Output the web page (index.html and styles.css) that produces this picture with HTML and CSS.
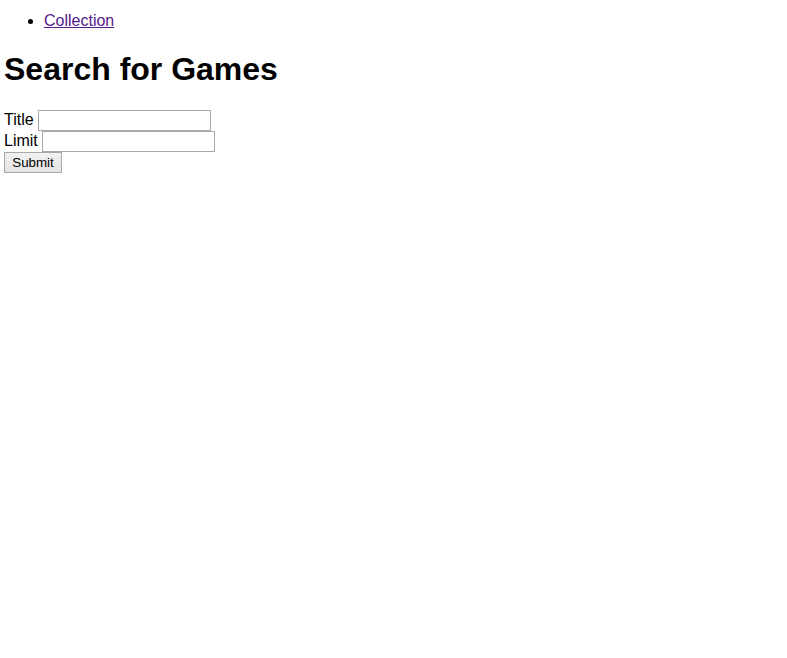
FILE: index.html
```html
<!DOCTYPE html>
<html>
<head>
<meta charset="utf-8">
<link rel="stylesheet" href="styles.css">
</head>
<body>
<ul class="nav">
  <li><a href="#" class="nav-link">Collection</a></li>
</ul>
<h1 class="title">Search for Games</h1>
<form class="search">
  <div class="row"><label class="lbl">Title</label><input class="field" type="text"></div>
  <div class="row"><label class="lbl">Limit</label><input class="field" type="text"></div>
  <div class="row"><button class="btn" type="button">Submit</button></div>
</form>
</body>
</html>
```
FILE: styles.css
```css
html, body {
  background: #fff;
}
body {
  margin: 4px;
  font-family: "Liberation Sans", Arial, sans-serif;
  font-size: 16px;
  color: #000;
}
.nav {
  margin: 8px 0 16px;
  padding-left: 40px;
}
.nav-link {
  color: #551a8b;
}
.title {
  font-size: 32px;
  font-weight: bold;
  margin: 21.44px 0;
}
.search {
  margin: 0;
}
.row {
  display: flex;
  align-items: flex-start;
  gap: 4px;
  height: 21px;
}
.lbl {
  line-height: 18px;
  padding-top: 1px;
}
.field {
  box-sizing: border-box;
  width: 173px;
  height: 21px;
  border: 1px solid #a9a9a9;
  padding: 1px 2px;
  margin: 0;
  font-family: "Liberation Sans", Arial, sans-serif;
  font-size: 13.33px;
  background: #fff;
}
.btn {
  box-sizing: border-box;
  width: 58px;
  height: 21px;
  margin: 0;
  padding: 0 6px;
  border: 1px solid #a9a9a9;
  background: linear-gradient(#f2f2f2, #e3e3e3);
  font-family: "Liberation Sans", Arial, sans-serif;
  font-size: 13.33px;
  color: #000;
}
```
